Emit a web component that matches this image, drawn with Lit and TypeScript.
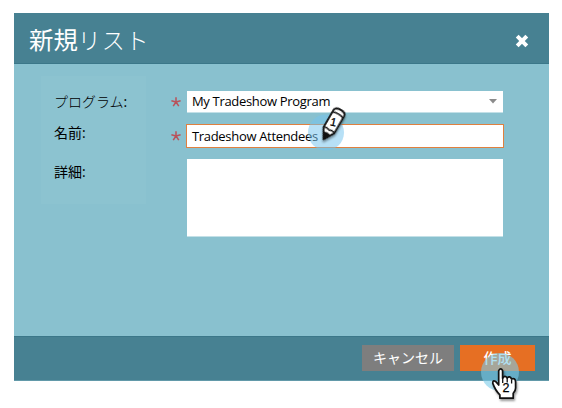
import { LitElement, html, css, svg } from "lit";
import { customElement, property } from "lit/decorators.js";

@customElement("required-mark")
class RequiredMark extends LitElement {
  static styles = css`
    :host { display: block; width: 10px; height: 10px; }
    svg { display: block; }
  `;
  render() {
    return html`<svg width="10" height="10" viewBox="0 0 10 10">
      <path d="M5 5V0.2M5 5L0.4 3.8M5 5L9.6 3.8M5 5L2.2 9.2M5 5L7.8 9.2" stroke="#b9525a" stroke-width="1.5" fill="none"/>
    </svg>`;
  }
}

@customElement("step-pointer")
class StepPointer extends LitElement {
  @property() kind = "pencil";
  @property() step = "1";
  static styles = css`
    :host { display: block; }
    svg { display: block; overflow: visible; }
    .num { font-family: "Liberation Sans", Arial, sans-serif; fill: #000; stroke: #000; stroke-width: 0.25px; }
    .shadow { filter: drop-shadow(1px 2px 1px rgba(0, 0, 0, 0.4)); }
  `;
  render() {
    const pencil = svg`
      <circle cx="18" cy="28.5" r="18" fill="#74c4ee" fill-opacity="0.52"/>
      <g class="shadow" transform="translate(15.6 35.2) rotate(30)">
        <path d="M0 0L-6 -10.5V-30.5Q-5.5 -34 0 -34Q6 -34 6.3 -30.5V-10.5Z" fill="#fff" stroke="#111" stroke-width="1.8" stroke-linejoin="round"/>
        <path d="M-6 -28Q0 -30.5 6.3 -28" fill="none" stroke="#111" stroke-width="1.5"/>
        <path d="M-6 -10.5Q-3 -12.5 0 -10.5Q3 -12.5 6.3 -10.5" fill="none" stroke="#111" stroke-width="1.4"/>
        <path d="M0 0L-3.4 -6.5Q0 -8 3.8 -6.5Z" fill="#111" stroke="#111" stroke-width="0.8"/>
      </g>
      <text class="num" x="22.4" y="22" font-size="11.5" transform="rotate(12 25 18)">${this.step}</text>`;
    const hand = svg`
      <circle cx="19" cy="19" r="19" fill="#7bcbe9" fill-opacity="0.6"/>
      <g class="shadow">
        <path d="M17.7 17.6Q19.8 14 21.6 17.6V25.2Q23.8 21.6 26.2 25Q28.7 22.2 30.6 26Q34.4 24.6 34.6 29V35Q34.6 38 32.2 40.3V45.2H18.9V41.8Q14.6 38 11.8 30.4Q11.6 26.6 14.6 28.4L17.7 32Z" fill="#fff" stroke="#111" stroke-width="1.7" stroke-linejoin="round"/>
        <path d="M21.7 24V30M26.2 25V29.5M30.6 26.5V30.5" fill="none" stroke="#111" stroke-width="1.3"/>
      </g>
      <text class="num" x="21.5" y="39.4" font-size="12.5">${this.step}</text>`;
    return html`<svg width="40" height="48" viewBox="0 0 40 48">${this.kind === "pencil" ? pencil : hand}</svg>`;
  }
}

@customElement("app-root")
class AppRoot extends LitElement {
  static styles = css`
    :host {
      display: block;
      position: relative;
      width: 562px;
      height: 408px;
      box-sizing: border-box;
      padding: 13px 13px 27px 14px;
      background: #fff;
      font-family: "Noto Sans CJK JP", sans-serif;
      color: #000;
    }
    .dialog { display: flex; flex-direction: column; height: 368px; background: #89c1cf; }
    .head {
      display: flex; align-items: center; justify-content: space-between;
      height: 51px; box-sizing: border-box; padding: 0 20px 0 15px;
      background: #478192; border-bottom: 1px solid #3b7789; color: #fff;
    }
    .title { margin: 2px 0 0; font-size: 24.4px; font-weight: 400; line-height: 48px; white-space: nowrap; }
    .kana { font-weight: 300; }
    .title .kana { font-size: 23px; letter-spacing: 0.9px; }
    .close { display: block; margin-top: 5px; }
    .body { display: flex; flex: 1; padding: 12px 0 0 27px; }
    .labels {
      width: 105px; height: 128px; box-sizing: border-box; padding: 15px 0 0 13px;
      background: #8cc3d0; font-size: 14px; line-height: 20px; white-space: nowrap;
    }
    .labels div { margin-bottom: 11px; }
    .labels .name { margin-top: -1px; }
    .labels .last { margin-top: 18px; }
    .labels .kana { letter-spacing: 0; font-size: 14px; }
    .colon { font-family: "Open Sans", sans-serif; }
    .marks { padding: 21px 0 0 25px; width: 15px; }
    .marks required-mark { margin-bottom: 24px; }
    .fields { width: 318px; padding-top: 15px; font: 13px/21px "Open Sans", sans-serif; letter-spacing: -0.32px; white-space: nowrap; }
    .input { background: #fff; box-sizing: border-box; margin: 0 1px; padding-left: 5px; height: 22px; }
    .select { display: flex; justify-content: space-between; align-items: center; padding-right: 6px; border-bottom: 1px solid #c3e0e7; }
    .focused { margin: 11px 0 0; height: 24px; border: 1px solid #e0803f; padding-left: 5px; line-height: 22px; }
    .area { height: 78px; margin-top: 11px; border-bottom: 1px solid #c3e0e7; }
    .foot {
      display: flex; gap: 6px; height: 45px; box-sizing: border-box; padding: 8px 14px 0 0;
      justify-content: flex-end; background: #478192; border-top: 1px solid #3b7789; border-bottom: 1px solid #6299a9;
    }
    .btn { border: 0; padding: 0; height: 26px; color: #fff; font: 14px/23px "Noto Sans CJK JP", sans-serif; white-space: nowrap; text-align: center; }
    .cancel { width: 92px; background: #7e7e7e; }
    .create { width: 75px; background: #e66f23; font-weight: 500; }
    .btn span { display: block; margin-top: -2px; }
    .p1 { position: absolute; left: 308px; top: 104px; }
    .p2 { position: absolute; left: 481px; top: 353px; }
  `;
  render() {
    return html`
      <div class="dialog">
        <div class="head">
          <h1 class="title">新規<span class="kana">リスト</span></h1>
          <svg class="close" width="14" height="14" viewBox="0 0 14 14"><path d="M2.2 2.2L11.8 11.8M11.8 2.2L2.2 11.8" stroke="#fff" stroke-width="4"/></svg>
        </div>
        <div class="body">
          <div class="labels">
            <div><span class="kana">プログラム</span><span class="colon">:</span></div>
            <div class="name">名前<span class="colon">:</span></div>
            <div class="last">詳細<span class="colon">:</span></div>
          </div>
          <div class="marks"><required-mark></required-mark><required-mark></required-mark></div>
          <div class="fields">
            <div class="input select"><span>My Tradeshow Program</span>
              <svg width="8" height="5" viewBox="0 0 8 5"><path d="M0 0H8L4 4.5Z" fill="#8b8b8b"/></svg></div>
            <div class="input focused">Tradeshow Attendees</div>
            <div class="input area"></div>
          </div>
        </div>
        <div class="foot">
          <button class="btn cancel"><span>キャンセル</span></button>
          <button class="btn create"><span>作成</span></button>
        </div>
      </div>
      <step-pointer class="p1" kind="pencil" step="1"></step-pointer>
      <step-pointer class="p2" kind="hand" step="2"></step-pointer>
    `;
  }
}
